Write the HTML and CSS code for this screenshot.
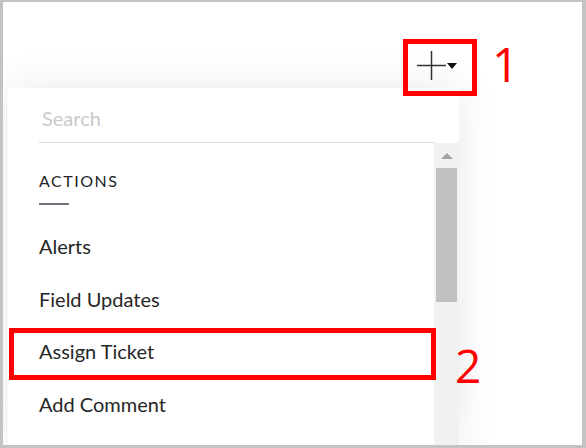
FILE: index.html
```html
<!DOCTYPE html>
<html lang="en">
<head>
  <meta charset="UTF-8" />
  <meta name="viewport" content="width=device-width, initial-scale=1.0"/>
  <title>Add action menu</title>
  <link rel="stylesheet" href="styles.css">
</head>
<body>
  <div class="frame">
    <div class="topbar">
      <button class="add-btn" type="button">
        <svg class="plus" width="29" height="29" viewBox="0 0 29 29">
          <line x1="0" y1="14.5" x2="29" y2="14.5" />
          <line x1="14.5" y1="0" x2="14.5" y2="29" />
        </svg>
        <svg class="caret" width="10" height="6" viewBox="0 0 10 6">
          <polygon points="0,0 10,0 5,6" />
        </svg>
      </button>
    </div>

    <div class="panel">
      <div class="search">
        <input type="text" placeholder="Search">
      </div>
      <div class="list">
        <div class="items">
          <div class="group-title">ACTIONS</div>
          <div class="group-rule"></div>
          <ul class="menu">
            <li>Alerts</li>
            <li>Field Updates</li>
            <li>Assign Ticket</li>
            <li>Add Comment</li>
          </ul>
        </div>
        <div class="scrollbar">
          <div class="scroll-up"><span class="arrow"></span></div>
          <div class="thumb"></div>
        </div>
      </div>
    </div>

    <!-- annotations drawn over the screenshot -->
    <div class="callout box-1"></div>
    <span class="callout-num num-1">1</span>
    <div class="callout box-2"></div>
    <span class="callout-num num-2">2</span>
  </div>
</body>
</html>
```

FILE: styles.css
```css
body {
  margin: 0;
  font-family: Lato, "Open Sans", sans-serif;
  color: #262626;
}
.frame {
  position: relative;
  width: 586px;
  height: 448px;
  box-sizing: border-box;
  border-style: solid;
  border-color: #c3c3c3;
  border-width: 2px 4px 3px 3px;
  background: #fff;
  overflow: hidden;
}
.topbar {
  height: 86px;
  box-sizing: border-box;
  display: flex;
  align-items: flex-start;
  padding: 49px 0 0 414px;
}
.add-btn {
  display: flex;
  align-items: center;
  gap: 1px;
  padding: 0;
  border: 0;
  background: none;
  cursor: pointer;
}
.plus line {
  stroke: #333;
  stroke-width: 1.5;
}
.caret polygon {
  fill: #111;
}
.panel {
  margin-left: 5px;
  width: 451px;
  height: 357px;
  background: #fff;
  box-shadow: 0 0 40px rgba(0, 0, 0, 0.09);
  overflow: hidden;
}
.search {
  height: 55px;
  box-sizing: border-box;
  padding: 0 25px 0 31px;
}
.search input {
  width: 100%;
  height: 55px;
  box-sizing: border-box;
  border: 0;
  border-bottom: 1px solid #d3deea;
  padding: 5px 0 0 3px;
  font-family: Lato, sans-serif;
  font-size: 20px;
  color: #262626;
  outline: none;
  background: transparent;
}
.search input::placeholder {
  color: #c9c9c9;
}
.list {
  display: flex;
  height: 302px;
}
.items {
  flex: 1;
}
.group-title {
  padding: 28px 0 0 31px;
  font-size: 16px;
  line-height: 20px;
  letter-spacing: 1.5px;
  color: #222;
}
.group-rule {
  width: 30px;
  height: 2px;
  margin: 12px 0 15px 31px;
  background: #6f747c;
}
.menu {
  list-style: none;
  margin: 0;
  padding: 0;
}
.menu li {
  height: 52.5px;
  line-height: 52.5px;
  padding-left: 31px;
  font-size: 20px;
  color: #262626;
}
.scrollbar {
  width: 25px;
  background: #f1f1f1;
}
.scroll-up {
  height: 25px;
  display: flex;
  align-items: center;
  justify-content: center;
}
.arrow {
  width: 0;
  height: 0;
  border-left: 6px solid transparent;
  border-right: 6px solid transparent;
  border-bottom: 6px solid #a3a3a3;
}
.thumb {
  height: 134px;
  margin: 0 2px;
  background: #c1c1c1;
}
.callout {
  position: absolute;
  box-sizing: border-box;
  border: 5px solid #fe0000;
}
.box-1 {
  left: 400px;
  top: 37px;
  width: 74px;
  height: 57px;
}
.box-2 {
  left: 6px;
  top: 326px;
  width: 427px;
  height: 52px;
}
.callout-num {
  position: absolute;
  font-family: "Open Sans", sans-serif;
  line-height: 1;
  color: #fe0000;
}
.num-1 {
  left: 489px;
  top: 39px;
  font-size: 47px;
}
.num-2 {
  left: 452px;
  top: 340px;
  font-size: 46px;
}
```
